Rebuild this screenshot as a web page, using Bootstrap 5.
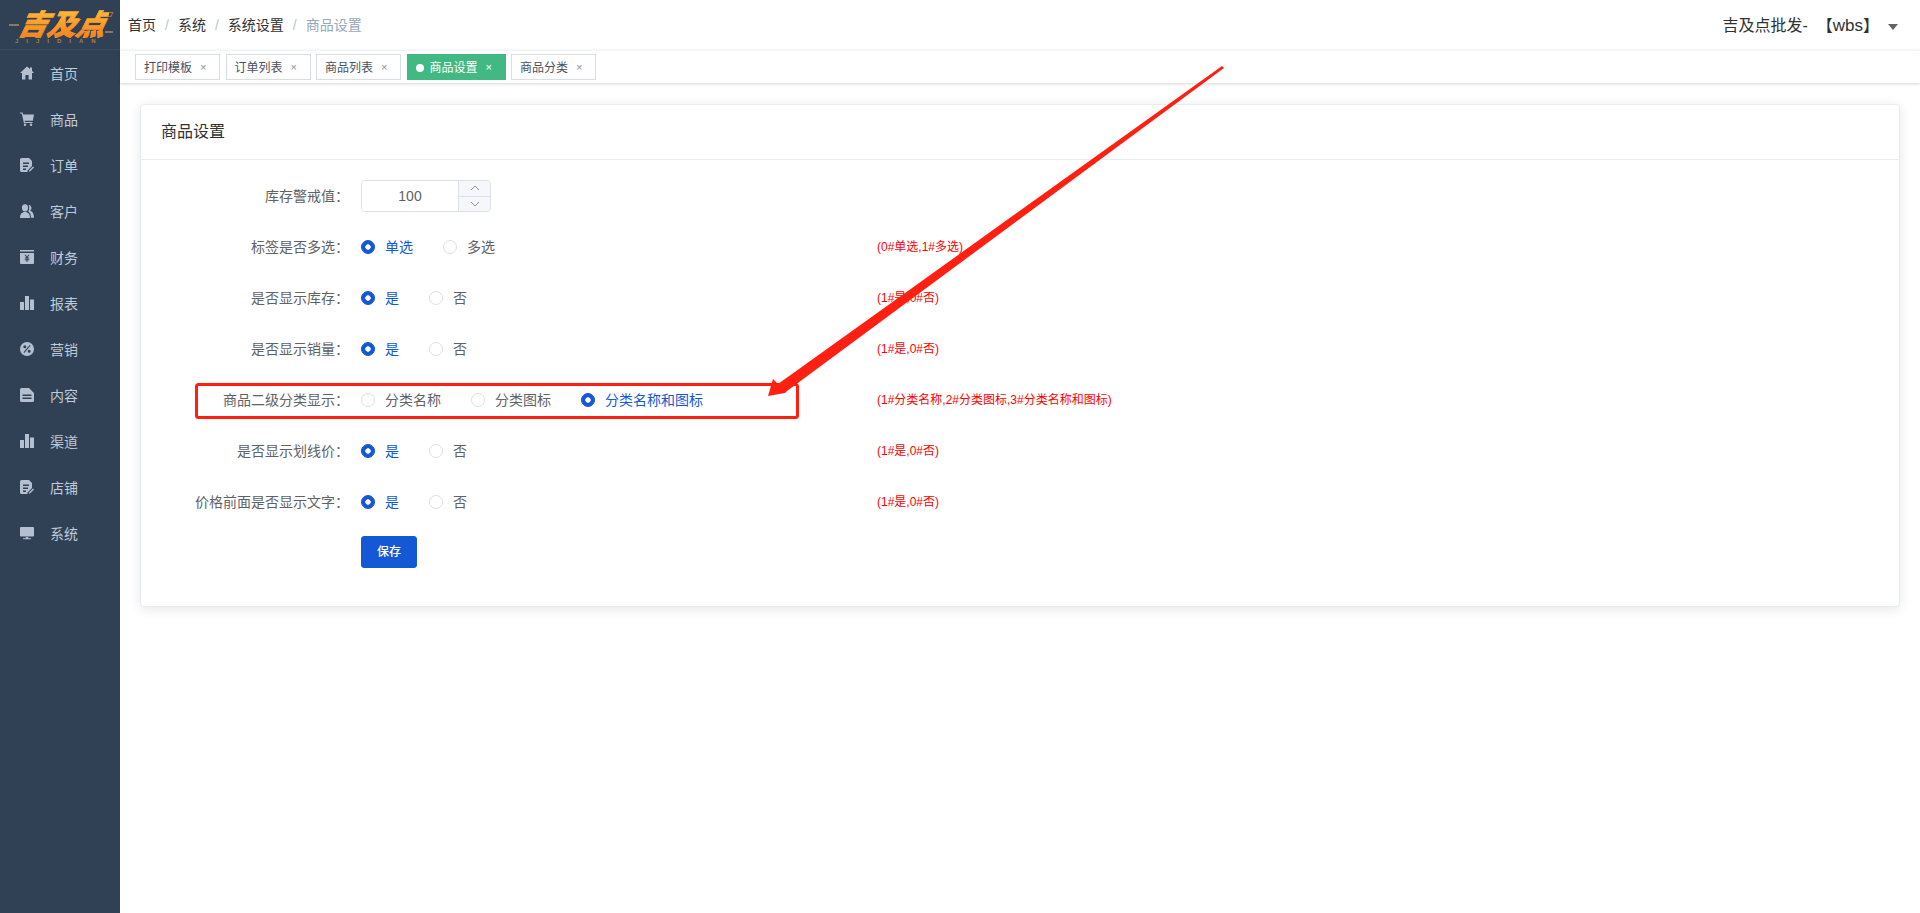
<!doctype html>
<html lang="zh-CN">
<head>
<meta charset="utf-8">
<title>商品设置</title>
<link rel="stylesheet" href="https://cdn.jsdelivr.net/npm/bootstrap@5.3.0/dist/css/bootstrap.min.css">
<style>
html,body{height:100%}
body{font-family:"Liberation Sans","Noto Sans CJK SC",sans-serif;font-size:14px;color:#606266;background:#fff;overflow:hidden}
.side-bar{width:120px;flex:none;height:913px;background:#304156}
.logo-box{height:50px;border-bottom:1px solid #3a4a60;overflow:hidden}
.logo-dash{position:absolute;height:2px;background:#8b7a55}
.logo-main{position:absolute;left:20px;top:6px;font-family:"Noto Sans CJK SC",sans-serif;font-weight:900;font-style:italic;font-size:29px;line-height:32px;white-space:nowrap;background:linear-gradient(180deg,#ffc23d,#f7801e);-webkit-background-clip:text;background-clip:text;color:transparent;-webkit-text-stroke:.5px #f89a2a;transform:skewX(-14deg)}
.logo-sub{position:absolute;left:15px;top:38px;width:92px;font-size:6px;line-height:7px;letter-spacing:8px;color:#a8823f;white-space:nowrap;font-weight:700}
.logo-wrap{position:relative;height:49px}
.menu-list{padding-top:1px}
.menu-item{height:46px;padding-left:20px;gap:16px;color:#bfcbd9;line-height:1}
.menu-item svg{width:14px;height:14px;fill:#b4c0cf;flex:none;margin-top:-2px}
.top-bar{height:50px;padding:0 22px 0 8px}
.breadcrumb{--bs-breadcrumb-margin-bottom:0;--bs-breadcrumb-divider-color:#c0c4cc;--bs-breadcrumb-item-padding-x:9px;--bs-breadcrumb-item-active-color:#97a8be;line-height:20px}
.breadcrumb-item a{color:#303133;text-decoration:none}
.user-name{font-size:16px;color:#303133;gap:9px;line-height:1}
.user-id{font-size:17px}
.user-caret{width:0;height:0;border-left:5.5px solid transparent;border-right:5.5px solid transparent;border-top:6px solid #606266;margin-top:3px}
.tab-strip{height:33px;padding:3px 15px 0;gap:5.5px;border-top:1px solid #f2f3f5;box-shadow:0 1px 3px rgba(0,0,0,.16)}
.page-tab{height:26px;padding:1px 13px 0 8px;border:1px solid #d8dce5;font-size:12px;color:#495060;background:#fff;line-height:1}
.page-tab .tab-x{margin-left:8px;font-size:11px;color:#8a8f99;width:6px}
.page-tab.is-on{background:#42b983;border-color:#42b983;color:#fff}
.page-tab.is-on .tab-x{color:#fff}
.tab-dot{width:8px;height:8px;border-radius:50%;background:#fff;margin-right:6px}
.page-body{padding:21px 20px 0}
.set-card{--bs-card-border-color:#e6ebf5;--bs-card-border-radius:4px;--bs-card-inner-border-radius:3px;box-shadow:0 2px 12px rgba(0,0,0,.1);height:503px}
.set-card .card-header{height:55px;padding:0 20px;background:#fff;color:#303133;font-size:16px;line-height:1;border-bottom-color:#e6ebf5;display:flex;align-items:center}
.set-card .card-body{padding:20px 20px 0}
.form-line{height:32px;margin-bottom:19px}
.form-line.tight{margin-bottom:18px}
.line-label{width:200px;padding-right:12px;margin-right:0;text-align:right;flex:none;line-height:1;margin-bottom:0;white-space:nowrap}
.line-ctrl{width:516px;flex:none;gap:30px}
.line-hint{font-size:12px;color:#f00;line-height:1;white-space:nowrap}
.opt{gap:10px;margin:0;line-height:1}
.opt.is-on{color:#1558d6}
.opt .form-check-input{width:14px;height:14px;margin:0;border:1px solid #dcdfe6;flex:none}
.opt .form-check-input:checked{background-color:#1558d6;border-color:#1558d6;background-image:radial-gradient(circle,#fff 2.4px,transparent 3px)}
.num-box{width:130px;height:32px;border:1px solid #dcdfe6;border-radius:4px;overflow:hidden}
.num-val{width:96px;flex:none;border:0;outline:0;text-align:center;color:#606266;font-size:14px;padding:0;background:#fff}
.num-btns{flex:1;border-left:1px solid #dcdfe6;background:#f5f7fa}
.num-btns>span{flex:1}
.num-btns>span+span{border-top:1px solid #dcdfe6}
.num-btns svg{width:10px;height:6px;fill:none;stroke:#909399;stroke-width:1}
.save-btn{--bs-btn-bg:#1558d6;--bs-btn-border-color:#1558d6;--bs-btn-hover-bg:#1558d6;--bs-btn-hover-border-color:#1558d6;--bs-btn-color:#fff;--bs-btn-font-size:12px;--bs-btn-font-weight:500;--bs-btn-border-radius:3px;--bs-btn-padding-x:0;--bs-btn-padding-y:0;width:56px;height:32px;line-height:1}
.mark-layer{position:absolute;left:0;top:0;width:1920px;height:913px;pointer-events:none}
</style>
</head>
<body class="d-flex position-relative">
<svg width="0" height="0" class="position-absolute">
<defs>
<symbol id="i-home" viewBox="0 0 14 14"><path d="M7 .4 10 3V1.400h2v3.400L14 7h-2v6.600H8.600V9H5.400v4.600H2V7H0z"/></symbol>
<symbol id="i-cart" viewBox="0 0 14 14"><path d="M0 .4h2.600l.6 2H14l-1.200 6.400H4.600l.3 1.200h7.600v1.100H3.900L1.800 1.500H0z"/><circle cx="5" cy="12.700" r="1.200"/><circle cx="11" cy="12.700" r="1.200"/></symbol>
<symbol id="i-note" viewBox="0 0 14 14"><path fill-rule="evenodd" d="M1.500 0H9l3 3v5l-4.500 4.600V14h-6A1.500 1.500 0 0 1 0 12.500V1.500A1.500 1.500 0 0 1 1.500 0zM3 4.500V6h6V4.500zm0 3V9h5V7.500zm0 3V12h3v-1.500z"/><path d="M9 12.500 13 8.500l1 1-4 4H9z"/></symbol>
<symbol id="i-user" viewBox="0 0 14 14"><ellipse cx="5" cy="3.800" rx="3.100" ry="3.600"/><path d="M0 14c0-3.800 1.600-6 5-6s5 2.200 5 6z"/><path d="M8.500.8a3.300 3.300 0 0 1 1.600 6c2.500.7 3.900 3.200 3.900 7h-3c0-3-1-5.200-2.700-6.500 1.300-1.800 1.300-4.700.2-6.500z"/></symbol>
<symbol id="i-money" viewBox="0 0 14 14"><path fill-rule="evenodd" d="M0 0h14v1.500H0zM0 3h14v10a1 1 0 0 1-1 1H1a1 1 0 0 1-1-1zm4.500 1.800L6.400 7.500H4.800v1h1.700v.8H4.800v1h1.700V12h1v-1.700h1.700v-1H7.500v-.8h1.700v-1H7.600l1.900-2.700H8.300L7 6.800 5.700 4.800z"/></symbol>
<symbol id="i-bars" viewBox="0 0 14 14"><path d="M0 6h4v8H0zM5 0h4v14H5zM10 3.500h4V14h-4z"/></symbol>
<symbol id="i-pct" viewBox="0 0 14 14"><path fill-rule="evenodd" d="M7 0a7 7 0 1 1 0 14A7 7 0 0 1 7 0zM4.800 3.300a1.500 1.500 0 1 0 0 3 1.500 1.500 0 0 0 0-3zm4.400 4.400a1.500 1.500 0 1 0 0 3 1.500 1.500 0 0 0 0-3zM9.700 3 3.500 10.200l.8.700 6.200-7.200z"/></symbol>
<symbol id="i-file" viewBox="0 0 14 14"><path fill-rule="evenodd" d="M1.500 0H9l5 5v7.500a1.500 1.500 0 0 1-1.500 1.500h-11A1.500 1.500 0 0 1 0 12.500V1.500A1.500 1.500 0 0 1 1.500 0zM2.500 6.500V8h9V6.500zm0 3V11h9V9.500z"/></symbol>
<symbol id="i-screen" viewBox="0 0 14 14"><path d="M1 1h12a1 1 0 0 1 1 1v7.500a1 1 0 0 1-1 1H1a1 1 0 0 1-1-1V2a1 1 0 0 1 1-1zM5.800 11h2.400v1.200H11v1H3v-1h2.800z"/></symbol>
</defs>
</svg>

<aside class="side-bar">
  <div class="logo-box">
    <div class="logo-wrap">
      <span class="logo-dash" style="left:9px;top:24px;width:10px"></span>
      <span class="logo-dash" style="left:105px;top:31px;width:8px"></span>
      <span class="logo-main">吉及点</span>
      <span class="logo-sub">JIJIDIAN</span>
    </div>
  </div>
  <nav class="menu-list d-flex flex-column">
    <div class="menu-item d-flex align-items-center"><svg><use href="#i-home"/></svg><span>首页</span></div>
    <div class="menu-item d-flex align-items-center"><svg><use href="#i-cart"/></svg><span>商品</span></div>
    <div class="menu-item d-flex align-items-center"><svg><use href="#i-note"/></svg><span>订单</span></div>
    <div class="menu-item d-flex align-items-center"><svg><use href="#i-user"/></svg><span>客户</span></div>
    <div class="menu-item d-flex align-items-center"><svg><use href="#i-money"/></svg><span>财务</span></div>
    <div class="menu-item d-flex align-items-center"><svg><use href="#i-bars"/></svg><span>报表</span></div>
    <div class="menu-item d-flex align-items-center"><svg><use href="#i-pct"/></svg><span>营销</span></div>
    <div class="menu-item d-flex align-items-center"><svg><use href="#i-file"/></svg><span>内容</span></div>
    <div class="menu-item d-flex align-items-center"><svg><use href="#i-bars"/></svg><span>渠道</span></div>
    <div class="menu-item d-flex align-items-center"><svg><use href="#i-note"/></svg><span>店铺</span></div>
    <div class="menu-item d-flex align-items-center"><svg><use href="#i-screen"/></svg><span>系统</span></div>
  </nav>
</aside>

<main class="flex-grow-1 d-flex flex-column">
  <header class="top-bar d-flex align-items-center justify-content-between">
    <ol class="breadcrumb">
      <li class="breadcrumb-item"><a href="#">首页</a></li>
      <li class="breadcrumb-item"><a href="#">系统</a></li>
      <li class="breadcrumb-item"><a href="#">系统设置</a></li>
      <li class="breadcrumb-item active">商品设置</li>
    </ol>
    <div class="user-name d-flex align-items-center"><span>吉及点批发-&nbsp;&nbsp;【<span class="user-id">wbs</span>】</span><span class="user-caret"></span></div>
  </header>
  <div class="tab-strip d-flex">
    <div class="page-tab d-flex align-items-center">打印模板<span class="tab-x">×</span></div>
    <div class="page-tab d-flex align-items-center">订单列表<span class="tab-x">×</span></div>
    <div class="page-tab d-flex align-items-center">商品列表<span class="tab-x">×</span></div>
    <div class="page-tab is-on d-flex align-items-center"><span class="tab-dot"></span>商品设置<span class="tab-x">×</span></div>
    <div class="page-tab d-flex align-items-center">商品分类<span class="tab-x">×</span></div>
  </div>
  <div class="page-body">
    <section class="card set-card">
      <div class="card-header">商品设置</div>
      <div class="card-body">
        <div class="form-line d-flex align-items-center">
          <label class="line-label">库存警戒值：</label>
          <div class="line-ctrl d-flex align-items-center">
            <div class="num-box d-flex">
              <input class="num-val" value="100" aria-label="库存警戒值">
              <div class="num-btns d-flex flex-column">
                <span class="d-flex align-items-center justify-content-center"><svg viewBox="0 0 10 6"><path d="M1 5l4-4 4 4"/></svg></span>
                <span class="d-flex align-items-center justify-content-center"><svg viewBox="0 0 10 6"><path d="M1 1l4 4 4-4"/></svg></span>
              </div>
            </div>
          </div>
        </div>
        <div class="form-line d-flex align-items-center">
          <label class="line-label">标签是否多选：</label>
          <div class="line-ctrl d-flex align-items-center">
            <label class="opt is-on d-flex align-items-center"><input class="form-check-input" type="radio" name="r1" checked>单选</label>
            <label class="opt d-flex align-items-center"><input class="form-check-input" type="radio" name="r1">多选</label>
          </div>
          <span class="line-hint">(0#单选,1#多选)</span>
        </div>
        <div class="form-line d-flex align-items-center">
          <label class="line-label">是否显示库存：</label>
          <div class="line-ctrl d-flex align-items-center">
            <label class="opt is-on d-flex align-items-center"><input class="form-check-input" type="radio" name="r2" checked>是</label>
            <label class="opt d-flex align-items-center"><input class="form-check-input" type="radio" name="r2">否</label>
          </div>
          <span class="line-hint">(1#是,0#否)</span>
        </div>
        <div class="form-line d-flex align-items-center">
          <label class="line-label">是否显示销量：</label>
          <div class="line-ctrl d-flex align-items-center">
            <label class="opt is-on d-flex align-items-center"><input class="form-check-input" type="radio" name="r3" checked>是</label>
            <label class="opt d-flex align-items-center"><input class="form-check-input" type="radio" name="r3">否</label>
          </div>
          <span class="line-hint">(1#是,0#否)</span>
        </div>
        <div class="form-line d-flex align-items-center">
          <label class="line-label">商品二级分类显示：</label>
          <div class="line-ctrl d-flex align-items-center">
            <label class="opt d-flex align-items-center"><input class="form-check-input" type="radio" name="r4">分类名称</label>
            <label class="opt d-flex align-items-center"><input class="form-check-input" type="radio" name="r4">分类图标</label>
            <label class="opt is-on d-flex align-items-center"><input class="form-check-input" type="radio" name="r4" checked>分类名称和图标</label>
          </div>
          <span class="line-hint">(1#分类名称,2#分类图标,3#分类名称和图标)</span>
        </div>
        <div class="form-line d-flex align-items-center">
          <label class="line-label">是否显示划线价：</label>
          <div class="line-ctrl d-flex align-items-center">
            <label class="opt is-on d-flex align-items-center"><input class="form-check-input" type="radio" name="r5" checked>是</label>
            <label class="opt d-flex align-items-center"><input class="form-check-input" type="radio" name="r5">否</label>
          </div>
          <span class="line-hint">(1#是,0#否)</span>
        </div>
        <div class="form-line tight d-flex align-items-center">
          <label class="line-label">价格前面是否显示文字：</label>
          <div class="line-ctrl d-flex align-items-center">
            <label class="opt is-on d-flex align-items-center"><input class="form-check-input" type="radio" name="r6" checked>是</label>
            <label class="opt d-flex align-items-center"><input class="form-check-input" type="radio" name="r6">否</label>
          </div>
          <span class="line-hint">(1#是,0#否)</span>
        </div>
        <div class="d-flex">
          <div class="line-label"></div>
          <button type="button" class="btn save-btn">保存</button>
        </div>
      </div>
    </section>
  </div>
</main>

<svg class="mark-layer" viewBox="0 0 1920 913">
  <rect x="196.500" y="384.500" width="601" height="33" rx="2" fill="none" stroke="#ff2012" stroke-width="3"/>
  <polygon fill="#ff2012" points="1222,66 778,384 773,379 768,396 785,393 787,391 1224,68"/>
</svg>
</body>
</html>
